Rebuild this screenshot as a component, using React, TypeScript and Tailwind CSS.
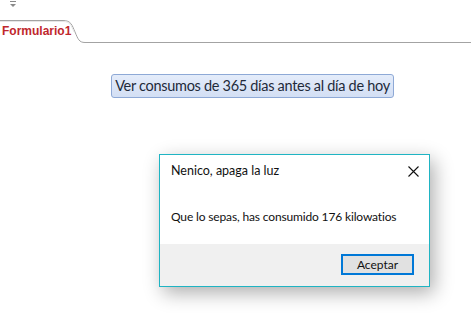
export default function App() {
  return (
    <div className="relative w-[471px] h-[313px] overflow-hidden bg-white font-['Lato',sans-serif]">
      {/* quick access glyph */}
      <div className="h-[20px] pl-[10px] pt-[1px]">
        <svg width="7" height="7" viewBox="0 0 7 7">
          <rect x="0" y="0" width="6" height="1" fill="#8a8a8a" />
          <path d="M0 3 L6 3 L3 6 Z" fill="#8a8a8a" />
        </svg>
      </div>

      {/* tab strip */}
      <div className="relative h-[24px]">
        <svg className="absolute inset-0" width="471" height="24" viewBox="0 0 471 24">
          <path d="M0 0.5 H63 C71 0.5 72 5 75 12 C78 19 79 22.5 85 22.5 H471" fill="none" stroke="#a3a3a3" strokeWidth="1" />
          <path d="M0 1.5 H63 C70 1.5 71 5 74 12" fill="none" stroke="#e6e6e6" strokeWidth="1" />
        </svg>
        <span className="relative block pl-[2px] pt-[4px] text-[12px] font-bold leading-[14px] text-[#c0272d] font-['Liberation_Sans',sans-serif]">
          Formulario1
        </span>
      </div>

      {/* form body */}
      <div className="pl-[111px] pt-[29px]">
        <button className="h-[24px] w-[283px] whitespace-nowrap rounded-[3px] border border-[#8ea9d6] bg-gradient-to-b from-[#e4ecfa] to-[#d3dff4] text-[14.5px] tracking-[-0.3px] leading-[20px] text-[#1e2a3a]">
          Ver consumos de 365 días antes al día de hoy
        </button>
      </div>

      {/* message box */}
      <div className="absolute left-[159px] top-[154px] flex h-[133px] w-[271px] flex-col border border-[#1fb4c3] bg-white shadow-[4px_6px_18px_rgba(0,0,0,0.32)]">
        <div className="flex h-[33px] items-center justify-between pl-[11px] pr-[10px]">
          <span className="text-[12.5px] text-[#111]">Nenico, apaga la luz</span>
          <svg width="11" height="11" viewBox="0 0 11 11">
            <path d="M0.5 0.5 L10.5 10.5 M10.5 0.5 L0.5 10.5" stroke="#111" strokeWidth="1.1" />
          </svg>
        </div>
        <div className="flex h-[56px] items-center pl-[11px] pt-[2px]">
          <span className="text-[12px] tracking-[-0.15px] text-[#111]">Que lo sepas, has consumido 176 kilowatios</span>
        </div>
        <div className="flex flex-1 items-center justify-end bg-[#f0f0f0] pr-[15px] pb-[1px]">
          <button className="h-[21px] w-[73px] border-2 border-[#0078d7] bg-[#e1e1e1] text-[12px] leading-[16px] text-[#111]">
            Aceptar
          </button>
        </div>
      </div>
    </div>
  );
}
